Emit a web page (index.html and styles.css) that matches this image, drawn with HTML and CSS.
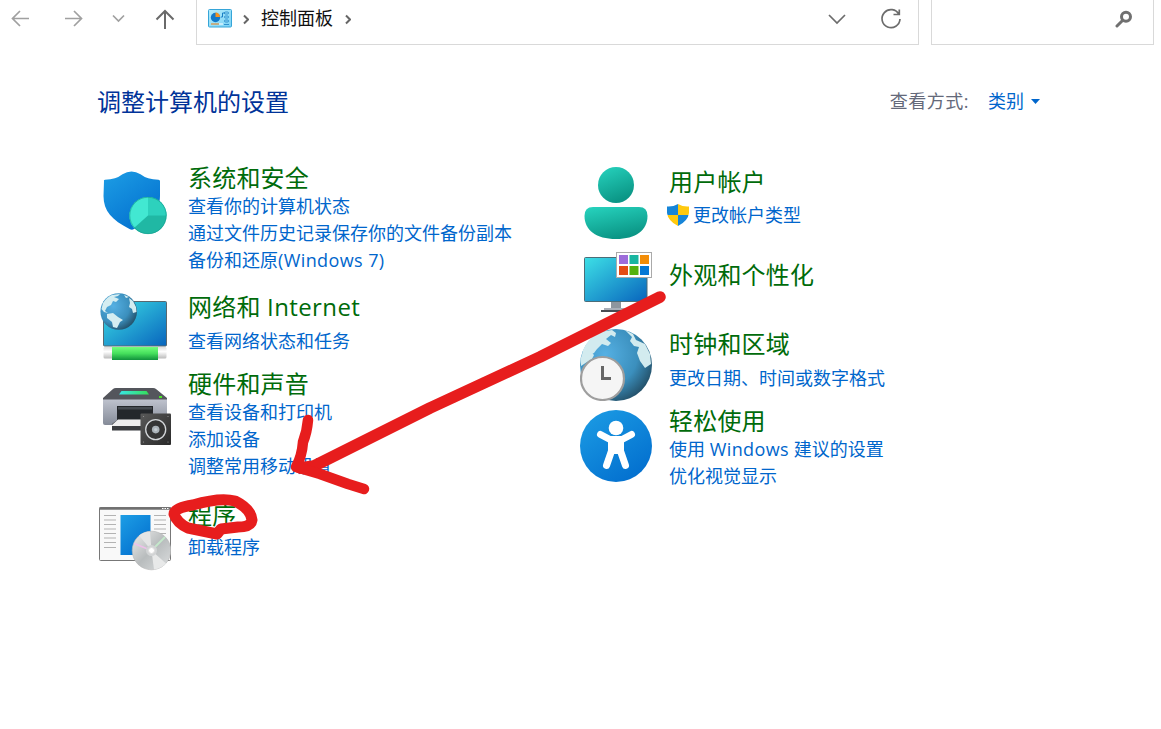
FILE: index.html
```html
<!DOCTYPE html>
<html lang="zh-CN">
<head>
<meta charset="utf-8">
<title>控制面板</title>
<link rel="stylesheet" href="styles.css">
</head>
<body>
<header class="toolbar">
  <svg class="nav" width="196" height="45" viewBox="0 0 196 45">
    <g class="nav-off"><path d="M29 18.500H12.500M20 11L12.500 18.500L20 26"/><path d="M65 18.500H81.500M74 11L81.500 18.500L74 26"/><path d="M113 15.500L118.500 21L124 15.500"/></g>
    <path class="nav-on" d="M165 29V11M156.500 19.500L165 11L173.500 19.500"/>
  </svg>
  <div class="address">
    <svg class="cp-icon" width="24" height="19" viewBox="0 0 24 19">
      <defs><linearGradient id="cp" x2="1" y2="1"><stop offset="0" stop-color="#b4ecfb"/><stop offset="1" stop-color="#7bd2f5"/></linearGradient></defs>
      <rect x=".5" y=".5" width="23" height="17.500" rx="1" fill="url(#cp)" stroke="#36a5d8"/>
      <circle cx="7.500" cy="8.500" r="4.700" fill="#1279c9"/><path d="M7.500 8V3.500A4.500 4.500 0 0 1 12 8Z" fill="#f6921e"/>
      <path d="M3 15H11" stroke="#f07d13"/><path d="M11 15H15" stroke="#fff"/><path d="M13 8H14.500V4H17" fill="none" stroke="#1a7fc4"/>
      <g fill="none" stroke="#1a7fc4" stroke-width=".8"><rect x="16.500" y="3" width="4" height="2" rx="1"/><rect x="16.500" y="7" width="4" height="2" rx="1"/><rect x="16.500" y="11" width="4" height="2" rx="1"/><path d="M16 15.500H21"/></g>
    </svg>
    <svg class="crumb-sep" width="6" height="11" viewBox="0 0 6 11"><path d="M1 1.500L5 5.500L1 9.500"/></svg>
    <span class="crumb">控制面板</span>
    <svg class="crumb-sep" width="6" height="11" viewBox="0 0 6 11"><path d="M1 1.500L5 5.500L1 9.500"/></svg>
    <svg class="address-tools" width="80" height="30" viewBox="825 5 80 30"><path d="M829 16L837 24L845 16"/><path d="M899 15.500A9 9 0 1 0 900 20M899.300 10.500V15.500H893.500"/></svg>
  </div>
  <div class="search"><svg width="18" height="18" viewBox="1115 10 18 18"><circle cx="1126" cy="16.800" r="4.500"/><path d="M1122.500 20.500L1117 26"/></svg></div>
</header>
<main class="panel">
  <div class="heading">
    <h1>调整计算机的设置</h1>
    <div class="view"><span class="view-label">查看方式:</span><a class="view-link">类别</a><i class="caret"></i></div>
  </div>
  <div class="columns">
    <section class="column">
      <article class="item security">
        <svg class="icon" viewBox="99 167 72 72">
          <defs><linearGradient id="blue" x2=".7" y2="1"><stop offset="0" stop-color="#1d9ee5"/><stop offset="1" stop-color="#0370cf"/></linearGradient></defs>
          <path d="M104 181Q103.300 180 105 179.800Q116 179.500 122.500 174.300Q131.500 168.500 140.500 174.300Q147 179.500 158.500 179.800Q160 180 160 181V196C160 211 149 221 134 229Q132 230.500 129.500 229C112 220 103.500 211 103.500 196Z" fill="url(#blue)"/>
          <circle cx="148" cy="215.500" r="18.600" fill="#20b8a4"/><path d="M148 215.500V197A18.600 18.600 0 0 0 134 228Z" fill="#42e8d2"/><path d="M148 215.500V197A18.600 18.600 0 0 1 166.600 215.500Z" fill="#2dd1bd"/><circle cx="148" cy="215.500" r="18.200" fill="none" stroke="#149a8c" stroke-opacity=".55"/>
        </svg>
        <div class="text"><h2>系统和安全</h2><a>查看你的计算机状态</a><a>通过文件历史记录保存你的文件备份副本</a><a>备份和还原<span class="latin">(Windows 7)</span></a></div>
      </article>
      <article class="item network spaced">
        <svg class="icon" viewBox="99 291 72 72">
          <defs><linearGradient id="screen" x2="1" y2="1"><stop offset="0" stop-color="#3de0e6"/><stop offset="1" stop-color="#0864bd"/></linearGradient><linearGradient id="green" x2="0" y2="1"><stop offset="0" stop-color="#72ff7c"/><stop offset=".5" stop-color="#45df5c"/><stop offset="1" stop-color="#10923c"/></linearGradient><radialGradient id="globe" cx=".35" cy=".35" r=".75"><stop offset="0" stop-color="#55b0e3"/><stop offset=".6" stop-color="#3b8fbd"/><stop offset="1" stop-color="#20485e"/></radialGradient><linearGradient id="pipe" x2="0" y2="1"><stop offset="0" stop-color="#ddd"/><stop offset=".4" stop-color="#fff"/><stop offset="1" stop-color="#bbb"/></linearGradient></defs>
          <rect x="103.500" y="301.500" width="63" height="44.500" rx="1" fill="url(#screen)" stroke="#59686f"/>
          <rect x="103.500" y="347" width="63" height="11.500" rx="1.500" fill="url(#pipe)"/><rect x="112" y="347" width="46" height="13" fill="url(#green)"/>
          <circle cx="118.700" cy="311.500" r="18.300" fill="url(#globe)"/>
          <g fill="#d4edf1"><path d="M103 303Q107 297 112 295L120 294L118 296L114 297L119 299L116 302L113 301L111 305L107 307L105 311L108 313L104 312L101.500 309Z"/><path d="M107 314L113 313L118 317L123 320L120 322L117 328L113 327L112 322L107 318Z"/><path d="M129 298L133 301L136 307L136.500 312L133 313L132 309L129 307L130 303Z"/><path d="M124 295L129 297L126 298Z"/></g>
        </svg>
        <div class="text"><h2>网络和 <span class="latin">Internet</span></h2><a>查看网络状态和任务</a></div>
      </article>
      <article class="item hardware">
        <svg class="icon" viewBox="99 381 72 72">
          <defs><linearGradient id="body" x2="0" y2="1"><stop offset="0" stop-color="#c2c6d1"/><stop offset="1" stop-color="#858b98"/></linearGradient><linearGradient id="speaker" x2="1" y2="1"><stop offset="0" stop-color="#595959"/><stop offset="1" stop-color="#292929"/></linearGradient><linearGradient id="light"><stop offset="0" stop-color="#39e5e6"/><stop offset="1" stop-color="#35df58"/></linearGradient></defs>
          <path d="M103 398H167V423Q167 425 165 425H105Q103 425 103 423Z" fill="url(#body)"/>
          <path d="M103 398L113 389Q114 388 116 388H153Q155 388 156 389L167 398V399.500H103Z" fill="#54565c"/>
          <path d="M121.500 391H146.500L149 394.500H119Z" fill="url(#light)"/><rect x="159" y="396" width="3" height="2" fill="#4ce32a"/>
          <path d="M117 406H153V420H117Z" fill="#24272b"/><path d="M118 407H152V409.500H118Z" fill="#454a50"/><path d="M112 424L118 419.500H153V430.500H112Z" fill="#393b3f"/><path d="M112 425L118 419.500H152V426H112Z" fill="#ededee"/>
          <rect x="140.500" y="413.500" width="30.500" height="31.500" rx="1" fill="url(#speaker)"/><circle cx="155.700" cy="429.600" r="10" fill="#353535" stroke="#d4d7da" stroke-width="1.300"/><circle cx="155.700" cy="429.600" r="3.800" fill="#aab2b8"/><circle cx="155.700" cy="429.600" r="1.600" fill="#c5ccd0"/><g fill="#999"><circle cx="143.500" cy="416.500" r=".6"/><circle cx="168" cy="416.500" r=".6"/><circle cx="143.500" cy="442" r=".6"/><circle cx="168" cy="442" r=".6"/></g>
        </svg>
        <div class="text"><h2>硬件和声音</h2><a>查看设备和打印机</a><a>添加设备</a><a>调整常用移动设置</a></div>
      </article>
      <article class="item programs spaced">
        <svg class="icon" viewBox="99 503 72 72">
          <defs><linearGradient id="disc" x2="1" y2="1"><stop offset="0" stop-color="#eee"/><stop offset=".5" stop-color="#b8bcbd"/><stop offset="1" stop-color="#dddfe0"/></linearGradient></defs>
          <rect x="99.500" y="507.500" width="71" height="53" rx="1" fill="#f9f9f9" stroke="#777"/><path d="M99.500 508.500H171" stroke="#707070" stroke-width="2.500"/><path d="M162 508.500H169" stroke="#fff" stroke-dasharray="1.500 1"/>
          <rect x="120.500" y="515" width="30" height="40" fill="url(#blue)"/>
          <path d="M104 515.500H116M104 520H116M104 524.500H116M104 529H116M104 533.500H116M104 538H116M104 542.500H116M104 547.500H116M154 515.500H166M154 520H166M154 524.500H166M154 529H166M154 533.500H166" stroke="#b3b3b3"/>
          <circle cx="151.500" cy="550.500" r="19.300" fill="url(#disc)" stroke="#b5b5b5" stroke-width=".6"/><path d="M151.500 550.500L139 535.500A19.300 19.300 0 0 1 150 531.500Z" fill="#e4e5e5"/><path d="M151.500 550.500L166 563.500A19.300 19.300 0 0 1 154 569.500Z" fill="#e8e9e9"/><path d="M151.500 550.500L134 543.500" stroke="#eec0ea" stroke-width="1.800"/><path d="M151.500 550.500L165 537" stroke="#c4e8cb" stroke-width="1.800"/><circle cx="151.500" cy="550.500" r="5.500" fill="#d2d4d5"/><circle cx="151.500" cy="550.500" r="3" fill="#fff" stroke="#ddd"/>
        </svg>
        <div class="text"><h2>程序</h2><a>卸载程序</a></div>
      </article>
    </section>
    <section class="column">
      <article class="item users spaced">
        <svg class="icon" viewBox="580 167 72 72"><defs><linearGradient id="teal" x2=".4" y2="1"><stop offset="0" stop-color="#27d4bf"/><stop offset="1" stop-color="#0b9686"/></linearGradient></defs><circle cx="616" cy="185" r="18" fill="url(#teal)"/><path d="M593 207H639Q647.500 207 647.500 216C647.500 230 636 239 616 239S584.500 230 584.500 216Q584.500 207 593 207Z" fill="url(#teal)"/></svg>
        <div class="text"><h2>用户帐户</h2><a class="shield-link"><svg width="22" height="23" viewBox="667 205 22 23"><defs><clipPath id="shield"><path d="M667 207.500Q673 208 678 205Q683 208 689 207.500V214Q688 222 678 227Q668 222 667 214Z"/></clipPath></defs><g clip-path="url(#shield)"><path d="M667 205H678V216H667ZM678 216H689V227H678Z" fill="#1685d8"/><path d="M678 205H689V216H678ZM667 216H678V227H667Z" fill="#ffc90e"/></g></svg>更改帐户类型</a></div>
      </article>
      <article class="item appearance">
        <svg class="icon" viewBox="580 248 72 72"><path d="M611 302H621V309H611Z" fill="#8e969e"/><path d="M604 308H628V310H604Z" fill="#a9afb8"/><path d="M601 310H631V312H601Z" fill="#484d54"/><rect x="584.500" y="257.500" width="62.500" height="44" rx="1" fill="url(#screen)" stroke="#4c6d78"/><rect x="616.500" y="252.500" width="35" height="25" fill="#fff" stroke="#aaa"/><path d="M619 255H628V264H619Z" fill="#9d6dda"/><path d="M629.500 255H638.500V264H629.500Z" fill="#18b5a0"/><path d="M640 255H649V264H640Z" fill="#f28d08"/><path d="M619 266H628V275H619Z" fill="#e44c13"/><path d="M629.500 266H638.500V275H629.500Z" fill="#55b10d"/><path d="M640 266H649V275H640Z" fill="#0578d5"/></svg>
        <div class="text"><h2>外观和个性化</h2></div>
      </article>
      <article class="item clock spaced">
        <svg class="icon" viewBox="580 329 72 72"><circle cx="616" cy="365" r="36" fill="url(#globe)"/><g fill="#d2ebef"><path d="M583 350Q588 338 600 332L612 330L616 333L615 337L611 335L606 339L611 343L608 346L602 344L597 349L594 353L588 356L586 359L582 357Z"/><path d="M625 330L633 334L636 340L645 344L650 354L651 364L645 368L640 361L637 353L639 347L634 346L630 341L632 337Z"/><path d="M583 352L590 351L594 355L592 359L587 362L581 366L580.500 359Z"/></g><circle cx="602.500" cy="378.500" r="21.500" fill="#f5f5f5" stroke="#9e9e9e" stroke-width="2.200"/><path d="M602.500 366V378.500H611" fill="none" stroke="#666" stroke-width="3"/></svg>
        <div class="text"><h2>时钟和区域</h2><a>更改日期、时间或数字格式</a></div>
      </article>
      <article class="item ease">
        <svg class="icon" viewBox="580 410 72 72"><circle cx="616" cy="446" r="36" fill="url(#blue)"/><circle cx="616" cy="428" r="7.300" fill="#fff"/><path d="M600.500 434.500L610 439.500H622L631.500 434.500" fill="none" stroke="#fff" stroke-width="7" stroke-linecap="round" stroke-linejoin="round"/><path d="M608 439H624V454H608Z" fill="#fff"/><path d="M611.500 451L606.500 465.500M620.500 451L625.500 465.500" stroke="#fff" stroke-width="7" stroke-linecap="round"/></svg>
        <div class="text"><h2>轻松使用</h2><a>使用 <span class="latin">Windows</span> 建议的设置</a><a>优化视觉显示</a></div>
      </article>
    </section>
  </div>
</main>
<svg class="annotation" viewBox="0 0 1161 729">
  <path d="M660 297L540 357L430 408L314 466L300 468" stroke-width="11.500"/><path d="M308 420Q307 432 303 442Q302 456 296 467L320 474L348 484L364 489" stroke-width="10.500"/>
  <path d="M217 534L188 528Q177 523 174 514Q174 508 193 505Q220 497 235 501Q251 509 252 520Q251 527 238 527L221 529Z" stroke-width="11"/>
</svg>
</body>
</html>
```
FILE: styles.css
```css
* { box-sizing: border-box; }
body { margin: 0; width: 1161px; height: 729px; overflow: hidden; position: relative; background: #fff; font-family: "Open Sans", "Noto Sans CJK SC", sans-serif; font-size: 18px; color: #0066cc; }
svg { display: block; flex-shrink: 0; }
.toolbar { display: flex; height: 45px; }
.nav { fill: none; stroke-width: 1.7; }
.nav-off { stroke: #a0a0a0; }
.nav-on { stroke: #6a6a6a; stroke-width: 2; }
.address { display: flex; align-items: center; width: 723px; height: 45px; padding: 0 13px 7px 11px; border: 1px solid #d9d9d9; border-top: 0; }
.crumb-sep { margin: 2px 0 0 12px; fill: none; stroke: #666; stroke-width: 2; }
.cp-icon + .crumb-sep { margin-left: 11px; }
.crumb { margin-left: 12px; color: #111; line-height: 27px; }
.address-tools { margin-left: auto; fill: none; stroke: #6c6c6c; stroke-width: 1.7; }
.search { display: flex; width: 223px; height: 45px; margin-left: 12px; padding: 10px 20px; justify-content: flex-end; border: 1px solid #d9d9d9; border-top: 0; }
.search svg { fill: none; stroke: #707070; stroke-width: 3; stroke-linecap: round; }
.panel { padding: 42px 0 0 97px; }
.heading { display: flex; height: 30px; justify-content: space-between; width: 943px; }
h1, h2 { margin: 0; font-size: 24px; font-weight: 400; line-height: 30px; white-space: nowrap; }
h1 { color: #003399; }
h2 { color: #006b0a; letter-spacing: .2px; }
.latin { letter-spacing: .4px; }
.view { display: flex; color: #64697a; line-height: 28px; }
.view-label { letter-spacing: .5px; }
.view-link { margin-left: 19px; color: #0066cc; }
.caret { margin: 12px 0 0 7px; width: 9px; height: 5px; background: #0066cc; clip-path: polygon(0 0, 100% 0, 50% 100%); }
.columns { display: grid; grid-template-columns: 481px 481px; padding-left: 2px; }
.item { display: flex; align-items: flex-start; gap: 17px; }
.icon { width: 72px; height: 72px; }
.text { display: flex; flex-direction: column; }
.text a { line-height: 27px; white-space: nowrap; }
.spaced h2 { margin-bottom: 6px; }
.security { padding-top: 46px; height: 174px; }
.security .icon { margin-top: 4px; }
.network { height: 78px; }
.network .text { padding-top: 1px; }
.hardware { height: 131px; }
.hardware .icon { margin-top: 12px; }
.programs { height: 80px; }
.programs .icon { margin-top: 3px; }
.programs h2 { margin-bottom: 4px; }
.users { padding-top: 50px; height: 131px; }
.users h2 { margin-bottom: 5px; }
.users .shield-link { display: flex; align-items: center; gap: 4px; margin-left: -2px; }
.appearance { height: 81px; }
.appearance .text { padding-top: 12px; }
.clock { height: 77px; }
.ease .icon { margin-top: 4px; }
.annotation { position: absolute; left: 0; top: 0; width: 1161px; height: 729px; fill: none; stroke: #e71d1d; stroke-linecap: round; stroke-linejoin: round; pointer-events: none; }
```
